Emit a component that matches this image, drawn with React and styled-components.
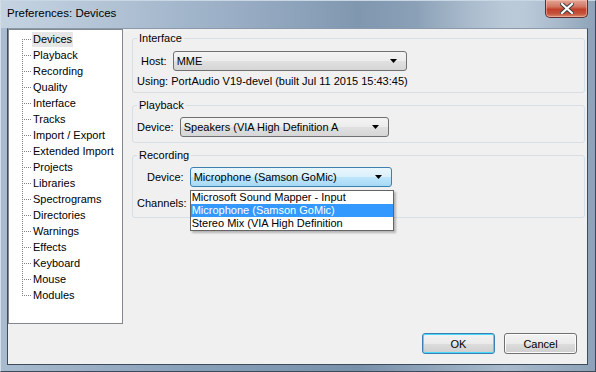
import React from 'react'
import styled, { createGlobalStyle } from 'styled-components'

const GlobalStyle = createGlobalStyle`
    body {
        margin: 0;
        background: #ffffff;
        font-family: "Liberation Sans", Arial, sans-serif;
    }
`

const treeItems = [
    'Devices', 'Playback', 'Recording', 'Quality', 'Interface', 'Tracks',
    'Import / Export', 'Extended Import', 'Projects', 'Libraries', 'Spectrograms',
    'Directories', 'Warnings', 'Effects', 'Keyboard', 'Mouse', 'Modules',
]

const recordingDevices = [
    'Microsoft Sound Mapper - Input',
    'Microphone (Samson GoMic)',
    'Stereo Mix (VIA High Definition',
]

function Arrow() {
    return (
        <svg width="7" height="4" viewBox="0 0 7 4">
            <path d="M0 0 H7 L3.5 4 Z" fill="#000" />
        </svg>
    )
}

function App() {
    return (
        <Window>
            <GlobalStyle />
            <TitleBar>
                <Title>Preferences: Devices</Title>
                <CloseButton>
                    <svg width="14" height="11" viewBox="0 0 14 11">
                        <path d="M2 1 L12 10 M12 1 L2 10" stroke="#3a3a3a" strokeWidth="4" strokeLinecap="square" />
                        <path d="M2 1 L12 10 M12 1 L2 10" stroke="#ffffff" strokeWidth="2.2" strokeLinecap="square" />
                    </svg>
                </CloseButton>
            </TitleBar>

            <Body>
                <Main>
                    <Tree>
                        <TreeLine />
                        {treeItems.map((item, i) => (
                            <TreeRow key={item}>
                                <Dots />
                                <TreeLabel selected={i === 0}>{item}</TreeLabel>
                            </TreeRow>
                        ))}
                    </Tree>

                    <Panel>
                        <Group bottom={4}>
                            <Legend>Interface</Legend>
                            <Row indent={4} top={6}>
                                <Label>Host:</Label>
                                <Select width={234}>
                                    <span>MME</span>
                                    <Arrow />
                                </Select>
                            </Row>
                            <Info>Using: PortAudio V19-devel (built Jul 11 2015 15:43:45)</Info>
                        </Group>

                        <Group bottom={5}>
                            <Legend>Playback</Legend>
                            <Row top={5}>
                                <Label>Device:</Label>
                                <Select width={209}>
                                    <span>Speakers (VIA High Definition A</span>
                                    <Arrow />
                                </Select>
                            </Row>
                        </Group>

                        <Group bottom={7}>
                            <Legend>Recording</Legend>
                            <Row indent={10} top={5}>
                                <Label>Device:</Label>
                                <SelectWrap>
                                    <Select width={202} focused>
                                        <span>Microphone (Samson GoMic)</span>
                                        <Arrow />
                                    </Select>
                                    <DropList>
                                        {recordingDevices.map((d, i) => (
                                            <DropItem key={d} active={i === 1}>{d}</DropItem>
                                        ))}
                                    </DropList>
                                </SelectWrap>
                            </Row>
                            <Row top={10}>
                                <Label>Channels:</Label>
                            </Row>
                        </Group>
                    </Panel>
                </Main>

                <Footer>
                    <Button primary>OK</Button>
                    <Button>Cancel</Button>
                </Footer>
            </Body>
        </Window>
    )
}

export default App

const Window = styled.div`
    width: 596px;
    height: 372px;
    box-sizing: border-box;
    display: flex;
    flex-direction: column;
    background: linear-gradient(90deg, #a9bccf 0%, #8aa1ba 30%, #7890aa 60%, #a8bacb 85%, #8da2b8 100%);
    border: 1px solid #3c4a5a;
    border-top-color: #c9d6e3;
    border-left-color: #d3dde8;
    color: #000;
`

const TitleBar = styled.div`
    height: 27px;
    display: flex;
    align-items: flex-start;
    justify-content: space-between;
    padding: 0 7px 0 6px;
    background: linear-gradient(90deg, rgba(220, 230, 240, 0.55) 0%, rgba(200, 215, 230, 0.35) 35%, rgba(120, 145, 170, 0) 70%, rgba(210, 222, 234, 0.5) 88%, rgba(150, 170, 190, 0) 100%);
`

const Title = styled.div`
    margin-top: 6px;
    font-size: 11.5px;
    color: #000;
`

const CloseButton = styled.div`
    width: 43px;
    height: 18px;
    margin-top: -1px;
    box-sizing: border-box;
    display: flex;
    align-items: center;
    justify-content: center;
    border: 1px solid #5a3034;
    border-top: none;
    border-radius: 0 0 5px 5px;
    background: linear-gradient(180deg, #e3a797 0%, #d27460 40%, #c1402a 55%, #c5533b 80%, #d88a6c 100%);
    box-shadow: inset 0 0 0 1px rgba(255, 200, 190, 0.5);
`

const Body = styled.div`
    flex: 1;
    margin: 0 7px 6px 6px;
    display: flex;
    flex-direction: column;
    background: #f0f0f0;
    border: 1px solid #3d4c5c;
    border-top-color: #8b9aab;
`

const Main = styled.div`
    display: flex;
`

const Tree = styled.div`
    position: relative;
    width: 115px;
    height: 295px;
    box-sizing: border-box;
    background: #ffffff;
    border: 1px solid #828790;
    padding: 1px 0 0 13px;
`

const TreeLine = styled.div`
    position: absolute;
    left: 13px;
    top: 9px;
    height: 257px;
    border-left: 1px dotted #808080;
`

const TreeRow = styled.div`
    height: 16px;
    display: flex;
    align-items: center;
`

const Dots = styled.div`
    width: 9px;
    margin-right: 1px;
    border-top: 1px dotted #808080;
`

const TreeLabel = styled.div`
    font-size: 11px;
    line-height: 15px;
    padding: 0 1px;
    background: ${p => (p.selected ? '#e6e6e6' : 'transparent')};
    white-space: nowrap;
`

const Panel = styled.div`
    flex: 1;
    display: flex;
    flex-direction: column;
    gap: 5px;
    padding: 2px 2px 0 9px;
`

const Group = styled.fieldset`
    margin: 0;
    padding: 0 5px ${p => p.bottom}px 4px;
    border: 1px solid #d5dfe5;
    border-radius: 3px;
    display: flex;
    flex-direction: column;
`

const Legend = styled.legend`
    padding: 0 2px;
    font-size: 11px;
    line-height: 14px;
`

const Row = styled.div`
    display: flex;
    align-items: center;
    gap: 6px;
    padding-left: ${p => p.indent || 0}px;
    margin-top: ${p => p.top || 0}px;
    line-height: 13px;
`

const Label = styled.div`
    font-size: 11px;
    white-space: nowrap;
`

const SelectWrap = styled.div`
    position: relative;
`

const Select = styled.div`
    width: ${p => p.width}px;
    height: 20px;
    box-sizing: border-box;
    display: flex;
    align-items: center;
    justify-content: space-between;
    padding: 0 9px 0 3px;
    font-size: 11px;
    border: 1px solid ${p => (p.focused ? '#3c7fb1' : '#707070')};
    border-radius: 3px;
    background: ${p => (p.focused
        ? 'linear-gradient(180deg, #eaf6fd 0%, #d9f0fc 50%, #bee6fd 51%, #a7d9f5 100%)'
        : 'linear-gradient(180deg, #f4f4f4 0%, #ececec 50%, #e0e0e0 51%, #d6d6d6 100%)')};
`

const DropList = styled.div`
    position: absolute;
    left: 0;
    top: 23px;
    width: 204px;
    box-sizing: border-box;
    background: #ffffff;
    border: 1px solid #646464;
    box-shadow: 2px 2px 2px rgba(0, 0, 0, 0.25);
`

const DropItem = styled.div`
    height: 13px;
    line-height: 13px;
    padding-left: 1px;
    font-size: 11px;
    white-space: nowrap;
    color: ${p => (p.active ? '#ffffff' : '#000000')};
    background: ${p => (p.active ? '#3399ff' : 'transparent')};
`

const Info = styled.div`
    font-size: 11px;
    line-height: 13px;
    margin-top: 4px;
`

const Footer = styled.div`
    flex: 1;
    display: flex;
    justify-content: flex-end;
    align-items: flex-start;
    gap: 9px;
    padding: 9px 10px 0 0;
`

const Button = styled.div`
    width: 73px;
    height: 21px;
    box-sizing: border-box;
    display: flex;
    align-items: center;
    justify-content: center;
    font-size: 11px;
    border: 1px solid ${p => (p.primary ? '#3c7fb1' : '#707070')};
    border-radius: 3px;
    background: linear-gradient(180deg, #f2f2f2 0%, #ebebeb 50%, #dddddd 51%, #cfcfcf 100%);
    box-shadow: ${p => (p.primary ? 'inset 0 0 0 1px #48d8fb' : 'inset 0 0 0 1px #fcfcfc')};
`
